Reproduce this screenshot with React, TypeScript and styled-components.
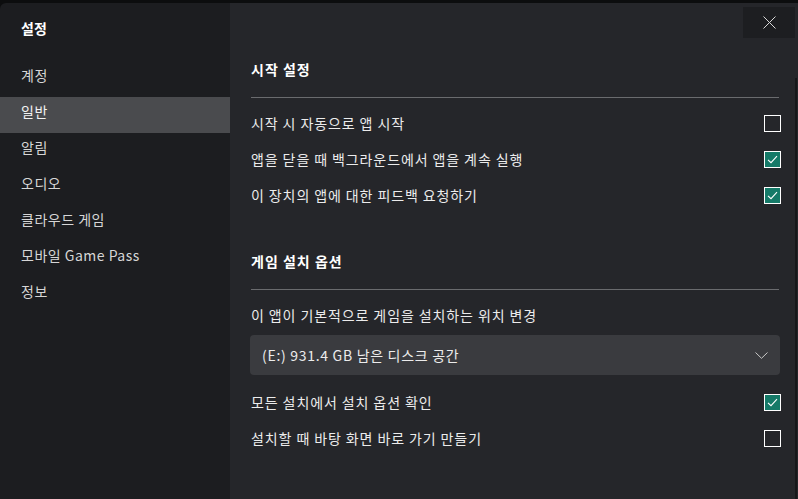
import React from 'react';
import styled, { createGlobalStyle } from 'styled-components';

const GlobalStyle = createGlobalStyle`
  html, body {
    margin: 0;
    padding: 0;
    background: #0c0d0e;
  }
  * {
    box-sizing: border-box;
  }
`;

const Shell = styled.div`
  display: flex;
  width: 798px;
  height: 499px;
  padding-top: 3px;
  background: #0c0d0e;
  font-family: 'Noto Sans CJK KR', 'Noto Sans', sans-serif;
  overflow: hidden;
`;

const Sidebar = styled.nav`
  width: 230px;
  background: #1c1d20;
  border-top-left-radius: 6px;
  display: flex;
  flex-direction: column;
`;

const SideTitle = styled.div`
  padding: 16px 21px 0;
  height: 58px;
  line-height: 18px;
  font-size: 14px;
  font-weight: 700;
  color: #ffffff;
`;

const NavItem = styled.div<{ $active?: boolean }>`
  height: 36px;
  display: flex;
  align-items: center;
  padding: 0 21px 8px;
  font-size: 14px;
  letter-spacing: 0.5px;
  color: ${({ $active }) => ($active ? '#f2f2f2' : '#d6d6d6')};
  background: ${({ $active }) => ($active ? '#4a4b4e' : 'transparent')};
`;

const Main = styled.main`
  flex: 1;
  position: relative;
  background: #25262a;
  display: flex;
  flex-direction: column;
`;

const TopBar = styled.div`
  display: flex;
  justify-content: flex-end;
  padding: 4px 3px 0 0;
`;

const CloseButton = styled.button`
  width: 52px;
  height: 31px;
  border: none;
  background: #1d1e21;
  display: flex;
  align-items: center;
  justify-content: center;
  padding: 0;
`;

const Scrollbar = styled.div`
  position: absolute;
  right: 1px;
  top: 75px;
  bottom: 0;
  width: 2px;
  background: #17181a;
`;

const Content = styled.div`
  padding: 0 17px 0 21px;
  display: flex;
  flex-direction: column;
`;

const Section = styled.section<{ $top: number }>`
  margin-top: ${({ $top }) => $top}px;
  display: flex;
  flex-direction: column;
`;

const Heading = styled.h2`
  margin: 0;
  height: 20px;
  line-height: 20px;
  font-size: 14px;
  font-weight: 700;
  letter-spacing: 1px;
  color: #ffffff;
`;

const Divider = styled.hr`
  margin: 18px 2px 8px 0;
  border: none;
  height: 1px;
  background: #6a6b6e;
`;

const Row = styled.label`
  height: 36px;
  display: flex;
  align-items: center;
  justify-content: space-between;
  padding-bottom: 2px;
  font-size: 14px;
  letter-spacing: 0.9px;
  color: #ececec;
`;

const Box = styled.span<{ $checked?: boolean }>`
  width: 17px;
  height: 17px;
  border: 1.5px solid #ffffff;
  background: ${({ $checked }) => ($checked ? '#157a68' : 'transparent')};
  display: flex;
  align-items: center;
  justify-content: center;
`;

const Select = styled.div`
  height: 40px;
  margin: 1px 1px 10px -1px;
  padding: 0 12px;
  border-radius: 4px;
  background: #3a3b3f;
  display: flex;
  align-items: center;
  justify-content: space-between;
  font-size: 14px;
  letter-spacing: 0.7px;
  color: #ececec;
`;

const Checkbox = ({ checked }: { checked?: boolean }) => (
  <Box $checked={checked}>
    {checked && (
      <svg width="11" height="9" viewBox="0 0 11 9">
        <path d="M1 4.8 L4 7.6 L10 1.2" fill="none" stroke="#ffffff" strokeWidth="1.1" />
      </svg>
    )}
  </Box>
);

const navItems = ['계정', '일반', '알림', '오디오', '클라우드 게임', '모바일 Game Pass', '정보'];

const App = () => {
  return (
    <>
      <GlobalStyle />
      <Shell>
        <Sidebar>
          <SideTitle>설정</SideTitle>
          {navItems.map((item) => (
            <NavItem key={item} $active={item === '일반'}>
              {item}
            </NavItem>
          ))}
        </Sidebar>
        <Main>
          <TopBar>
            <CloseButton aria-label="닫기">
              <svg width="13" height="13" viewBox="0 0 13 13">
                <path d="M0.5 0.5 L12.5 12.5 M12.5 0.5 L0.5 12.5" stroke="#d8d8d8" strokeWidth="1" />
              </svg>
            </CloseButton>
          </TopBar>
          <Content>
            <Section $top={21}>
              <Heading>시작 설정</Heading>
              <Divider />
              <Row>
                시작 시 자동으로 앱 시작
                <Checkbox />
              </Row>
              <Row>
                앱을 닫을 때 백그라운드에서 앱을 계속 실행
                <Checkbox checked />
              </Row>
              <Row>
                이 장치의 앱에 대한 피드백 요청하기
                <Checkbox checked />
              </Row>
            </Section>
            <Section $top={37}>
              <Heading>게임 설치 옵션</Heading>
              <Divider />
              <Row>이 앱이 기본적으로 게임을 설치하는 위치 변경</Row>
              <Select>
                (E:) 931.4 GB 남은 디스크 공간
                <svg width="13" height="7" viewBox="0 0 13 7">
                  <path d="M0.5 0.5 L6.5 6.3 L12.5 0.5" fill="none" stroke="#c8c8c8" strokeWidth="1" />
                </svg>
              </Select>
              <Row>
                모든 설치에서 설치 옵션 확인
                <Checkbox checked />
              </Row>
              <Row>
                설치할 때 바탕 화면 바로 가기 만들기
                <Checkbox />
              </Row>
            </Section>
          </Content>
          <Scrollbar />
        </Main>
      </Shell>
    </>
  );
};

export default App;
